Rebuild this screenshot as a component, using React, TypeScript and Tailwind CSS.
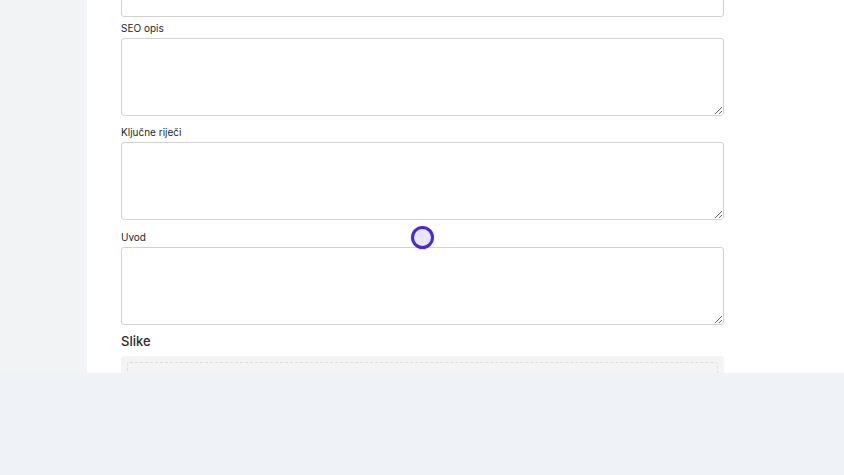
import React from 'react';

const Field: React.FC<{ label: string; gap?: string }> = ({ label, gap = 'mt-[9px]' }) => (
    <div className={`${gap} flex flex-col`}>
        <label className="mb-[3px] text-[10px] leading-[14px] text-[#1f1f1f]">{label}</label>
        <textarea className="h-[78px] w-full rounded-[3px] border border-[#d2d2d2] bg-white outline-none" />
    </div>
);

export default function App() {
    return (
        <div className="flex h-[475px] w-[844px] flex-col bg-[#eff2f7] font-['Inter',sans-serif]">
            <div className="relative flex h-[373px] shrink-0 overflow-hidden">
                <aside className="w-[87px] shrink-0 bg-[#f2f3f5]" />
                <main className="flex-1 bg-white pl-[34px]">
                    <div className="mt-[-19px] flex w-[603px] flex-col">
                        <input className="h-[36px] w-full rounded-[3px] border border-[#d2d2d2] bg-white outline-none" />
                        <Field label="SEO opis" gap="mt-[4px]" />
                        <Field label="Ključne riječi" />
                        <Field label="Uvod" gap="mt-[10px]" />
                        <h3 className="mt-[7px] text-[13px] font-medium leading-[18px] text-[#2a2a2a]">Slike</h3>
                        <div className="mt-[6px] rounded-[4px] bg-[#f4f4f4] p-[6px]">
                            <div className="h-[80px] rounded-[3px] border border-dashed border-[#dcdcdc]" />
                        </div>
                    </div>
                </main>
                <div className="absolute left-[411px] top-[226px] h-[23px] w-[23px] rounded-full border-[3px] border-[#4b23e6] bg-[#e9e7fb]" />
            </div>
        </div>
    );
}
